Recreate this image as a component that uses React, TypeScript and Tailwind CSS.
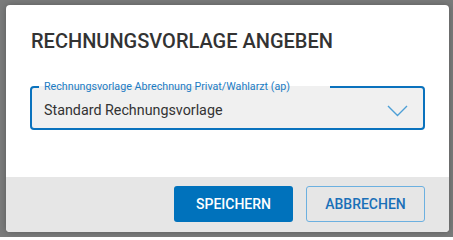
import React from "react";

export default function App() {
  return (
    <div
      className="w-[453px] h-[237px] bg-[#7a7b7b] pt-[5px] pl-[6px]"
      style={{ fontFamily: "Roboto, 'Liberation Sans', sans-serif" }}
    >
      <div className="w-[443px] h-[227px] bg-white rounded-[4px] overflow-hidden flex flex-col shadow-[0_0_6px_rgba(0,0,0,0.25)]">
        <div className="flex-1 px-[24px] pt-[23px]">
          <h1 className="text-[20px] leading-[26px] font-medium text-[#333333] pl-[1px]">
            RECHNUNGSVORLAGE ANGEBEN
          </h1>
          <fieldset className="mt-[26px] h-[50px] border-2 border-[#0a72bd] rounded-[4px] bg-[#f0f0f0] px-[7px] relative">
            <legend className="w-[291px] px-[5px] text-[10.7px] leading-[13px] text-[#1b7cc4]">
              Rechnungsvorlage Abrechnung Privat/Wahlarzt (ap)
            </legend>
            <div className="flex items-center justify-between pl-[5px] pr-[8px] mt-[7px]">
              <span className="text-[14.3px] leading-[20px] text-[#333333]">
                Standard Rechnungsvorlage
              </span>
              <svg width="21" height="12" viewBox="0 0 21 12" className="mt-[1px]">
                <path d="M1 1 L10.5 10.5 L20 1" fill="none" stroke="#4d9fd6" strokeWidth="1.4" />
              </svg>
            </div>
          </fieldset>
        </div>
        <div className="h-[55px] bg-[#e6e6e6] flex items-start justify-end gap-[13px] pt-[9px] pr-[24px]">
          <button className="w-[119px] h-[36px] rounded-[3px] bg-[#0072bc] text-white text-[14px] font-medium">
            SPEICHERN
          </button>
          <button className="w-[119px] h-[36px] rounded-[3px] border border-[#6cb0e0] text-[#1a70b8] text-[14px] font-medium">
            ABBRECHEN
          </button>
        </div>
      </div>
    </div>
  );
}
